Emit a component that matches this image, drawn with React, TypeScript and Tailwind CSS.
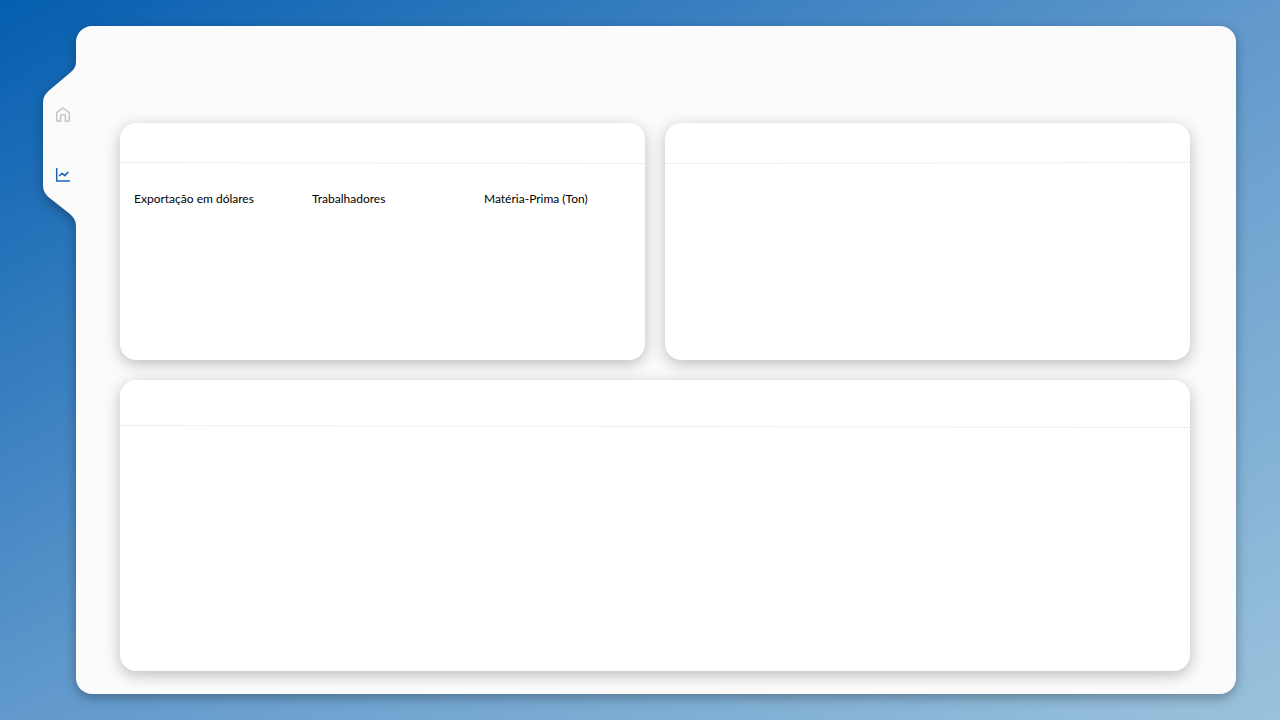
import React from "react";

function Rule({ from, to }: { from: number; to: number }) {
  return (
    <svg
      className="block h-1 w-full"
      viewBox="0 0 100 4"
      preserveAspectRatio="none"
      aria-hidden="true"
    >
      <line x1="0" y1={from} x2="100" y2={to} stroke="#eeeeee" strokeWidth="1" vectorEffect="non-scaling-stroke" />
    </svg>
  );
}

const cardClass =
  "flex min-w-0 flex-col rounded-2xl bg-white shadow-[0_4px_15px_rgba(0,0,0,0.25)]";

const metrics = ["Exportação em dólares", "Trabalhadores", "Matéria-Prima (Ton)"];

function HomeIcon() {
  return (
    <svg className="size-4" viewBox="0 0 16 16" fill="none" stroke="#c6c6c6" strokeWidth="1.5" strokeLinejoin="round" aria-hidden="true">
      <path d="M1.7 5.7 8 1l6.300 4.700v7.600a.9.9 0 0 1-.9.9h-3V8.700a.9.9 0 0 0-.9-.9h-3a.9.9 0 0 0-.9.9v5.500h-3a.9.9 0 0 1-.9-.9Z" />
    </svg>
  );
}

function ChartIcon() {
  return (
    <svg className="size-4" viewBox="0 0 16 16" fill="none" stroke="#1a66b2" strokeWidth="1.5" aria-hidden="true">
      <path d="M1.7 1v13H15" />
      <path d="m4.200 9 2.800-2.800 2.700 2.400 3.700-3.700" strokeLinejoin="round" />
    </svg>
  );
}

export default function App() {
  return (
    <div className="flex min-h-screen bg-[linear-gradient(to_bottom_right,#055eb0,#6199cc_50%,#9ac2dc)] py-[26px] pr-11 pl-[76px] font-['Lato','Liberation_Sans',sans-serif]">
      <div className="relative flex flex-1 drop-shadow-[0_4px_6px_rgba(0,0,0,0.3)]">
        <nav className="absolute top-8 -left-[33px] h-[172px] w-[35px]">
          <svg className="absolute inset-0 h-full w-full" viewBox="0 0 35 172" fill="#fbfbfb" aria-hidden="true">
            <path d="M35 0H33V3C33 8 31.500 11 28 14L6 32.500C2 36 0 39.500 0 44.500V127C0 132.500 2 136 6 139.500L27 156C31 159.500 33 163 33 168V172H35Z" />
          </svg>
          <div className="relative flex flex-col gap-11 pt-[49px] pl-3">
            <a href="#inicio" aria-label="Início" className="size-4"><HomeIcon /></a>
            <a href="#graficos" aria-label="Gráficos" aria-current="page" className="size-4"><ChartIcon /></a>
          </div>
        </nav>
        <main className="grid flex-1 grid-cols-2 grid-rows-[237fr_291fr] gap-5 rounded-2xl bg-[#fbfbfb] pt-[97px] pr-[46px] pb-[23px] pl-11">
          <section className={cardClass}>
            <header className="h-[38px]" />
            <Rule from={1.5} to={2.5} />
            <div className="grid grid-cols-[178px_172px_1fr] pt-[26px] pl-[14px] text-xs text-black">
              {metrics.map((label) => (
                <h2 key={label}>{label}</h2>
              ))}
            </div>
          </section>
          <section className={cardClass}>
            <header className="h-[38px]" />
            <Rule from={2.5} to={1.5} />
          </section>
          <section className={`${cardClass} col-span-2`}>
            <header className="h-11" />
            <Rule from={1.5} to={3.5} />
          </section>
        </main>
      </div>
    </div>
  );
}
